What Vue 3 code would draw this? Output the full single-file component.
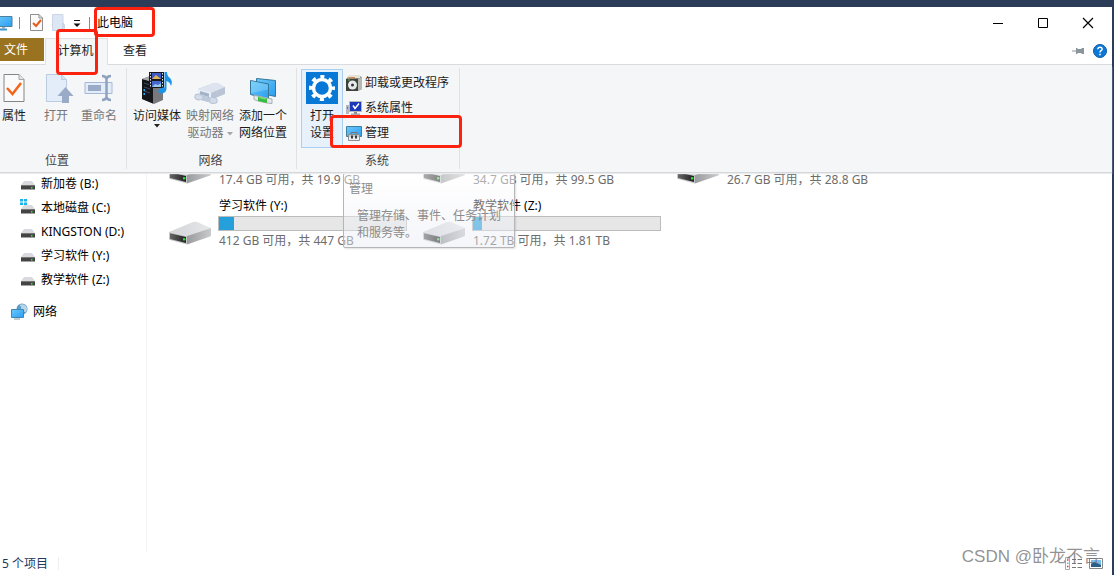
<script setup>
const places = [
  { name: '新加卷 (B:)' },
  { name: '本地磁盘 (C:)', system: true },
  { name: 'KINGSTON (D:)' },
  { name: '学习软件 (Y:)' },
  { name: '教学软件 (Z:)' },
]
const drives = [
  { detail: '17.4 GB 可用，共 19.9 GB' },
  { detail: '34.7 GB 可用，共 99.5 GB' },
  { detail: '26.7 GB 可用，共 28.8 GB' },
  { name: '学习软件 (Y:)', used: 8, detail: '412 GB 可用，共 447 GB' },
  { name: '教学软件 (Z:)', used: 5, detail: '1.72 TB 可用，共 1.81 TB' },
]
</script>

<template>
  <div class="desktop">
    <svg class="defs" width="0" height="0" aria-hidden="true">
      <defs>
        <linearGradient id="screen" x1="0" y1="0" x2="1" y2="1">
          <stop offset="0" stop-color="#6cc9fb" /><stop offset="1" stop-color="#2a9df0" />
        </linearGradient>
        <linearGradient id="driveTop" x1="0" y1="0" x2="1" y2="0">
          <stop offset="0" stop-color="#d2d4d8" /><stop offset="1" stop-color="#e6e7e9" />
        </linearGradient>
        <linearGradient id="driveSide" x1="0" y1="0" x2="1" y2="0">
          <stop offset="0" stop-color="#9a9b9e" /><stop offset="1" stop-color="#c9cacc" />
        </linearGradient>
        <linearGradient id="driveFront" x1="0" y1="0" x2="1" y2="0">
          <stop offset="0" stop-color="#666" /><stop offset="1" stop-color="#1f1f1f" />
        </linearGradient>
        <symbol id="drive" viewBox="0 0 44 24">
          <path d="M1 11 25 1q2-.6 4 0l14 6L19 15Z" fill="url(#driveTop)" />
          <path d="M19 15 43 7v7q0 1-1 1.500L19 23.500Z" fill="url(#driveSide)" />
          <path d="M1 11 19 15v8.500L2 19q-1-.4-1-1.500Z" fill="#c4c6c8" />
          <path d="M2 12.200 18 16v6L2 18Z" fill="url(#driveFront)" />
          <path d="M15 17.200h2.500v2.200H15Z" fill="#36e23c" />
        </symbol>
        <symbol id="smalldrive" viewBox="0 0 16 10">
          <path d="M3 0h8l3 4H0Z" fill="#d8dadd" />
          <path d="M0 4h14v4.500H0Z" fill="#444" />
          <path d="M0 4h14v1H0Z" fill="#777" />
          <path d="M10 6h1.500v1.500H10Z" fill="#3fe04a" />
        </symbol>
      </defs>
    </svg>

    <main class="window">
      <header class="titlebar">
        <svg class="pc" width="13" height="16" viewBox="0 0 13 16">
          <path d="M-3 1.500h15v10H-3Z" fill="url(#screen)" stroke="#4d7f9f" />
          <path d="M-1 14.500h8" stroke="#3c97cf" stroke-width="2" />
          <path d="M2 12h3v2H2Z" fill="#9db0bc" />
        </svg>
        <span class="bar-sep"></span>
        <button class="quick check" aria-label="属性">
          <svg width="13" height="17" viewBox="0 0 13 17">
            <path d="M.5.500h8.500l3.500 3.500v12.500H.5Z" fill="#fafafa" stroke="#8f8f8f" />
            <path d="M9 .5V4h3.500" fill="none" stroke="#8f8f8f" />
            <path d="m3 9 3 3 5-6" fill="none" stroke="#e85a1c" stroke-width="2" />
          </svg>
        </button>
        <button class="quick folder" aria-label="新建文件夹">
          <svg width="13" height="17" viewBox="0 0 13 17">
            <path d="M.5.500h10.500v9l1.500 1v6H.5Z" fill="#dce6f4" stroke="#ccd7e6" />
            <path d="M11 9v5l-2 2" fill="none" stroke="#b9c7dc" />
          </svg>
        </button>
        <button class="quick caret" aria-label="自定义快速访问工具栏">
          <svg width="8" height="8" viewBox="0 0 8 8"><path d="M1 .5h6" stroke="#111" /><path d="M.5 3.500h7L4 7Z" fill="#111" /></svg>
        </button>
        <span class="bar-sep"></span>
        <h1>此电脑</h1>
        <div class="controls">
          <button aria-label="最小化"><svg width="12" height="12"><path d="M1 6.500h10" stroke="#000" /></svg></button>
          <button aria-label="最大化"><svg width="12" height="12"><path d="M1.500 1.500h9v9h-9Z" fill="none" stroke="#000" /></svg></button>
          <button aria-label="关闭"><svg width="12" height="12"><path d="m1 1 10 10M11 1 1 11" stroke="#000" stroke-width="1.200" /></svg></button>
        </div>
      </header>

      <nav class="tabs">
        <button class="file">文件</button>
        <button class="tab active">计算机</button>
        <button class="tab">查看</button>
        <div class="tab-tools">
          <button aria-label="固定功能区">
            <svg width="12" height="8" viewBox="0 0 12 8"><path d="M0 4h4" stroke="#8b959c" /><path d="M4 1h1.500v1h4V1H12v6H9.500V6h-4v1H4Z" fill="#8b959c" /></svg>
          </button>
          <button aria-label="帮助">
            <svg width="14" height="14" viewBox="0 0 14 14">
              <circle cx="7" cy="7" r="6.500" fill="#0a78d6" stroke="#0a5ca8" />
              <path d="M4.800 5.200q.2-2 2.200-2t2.200 1.800q0 1-1.200 1.700-1 .6-1 1.700" fill="none" stroke="#fff" stroke-width="1.500" />
              <path d="M6.200 9.800h1.600v1.500H6.200Z" fill="#fff" />
            </svg>
          </button>
        </div>
      </nav>

      <section class="ribbon">
        <div class="group location">
          <div class="commands">
            <button class="big props">
              <svg width="22" height="32" viewBox="0 0 22 32">
                <path d="M1 2.500h15l5 5v22H1Z" fill="#fafafa" stroke="#858585" />
                <path d="M16 2.500v5h5" fill="#e6e6e6" stroke="#a5a5a5" />
                <path d="m4 16 5.500 6L18 11" fill="none" stroke="#f2661b" stroke-width="2.500" />
              </svg>
              <span>属性</span>
            </button>
            <button class="big open" disabled>
              <svg width="28" height="32" viewBox="0 0 28 32">
                <path d="M.5 2.500h15l5 5v22H.5Z" fill="#e3edf9" stroke="#bdcbe0" />
                <path d="M15.500 2.500v5h5" fill="#d2dff0" stroke="#bdcbe0" />
                <path d="m19.500 15 8 9H23v7h-7v-7h-4.500Z" fill="#9aabc8" />
              </svg>
              <span>打开</span>
            </button>
            <button class="big rename" disabled>
              <svg width="30" height="32" viewBox="0 0 30 32">
                <path d="M1 10.500h27v11H1Z" fill="#e3edf9" stroke="#a7b8d2" />
                <path d="M4 13h13v6H4Z" fill="#9aabc8" />
                <path d="M18 4q4 0 4.500 3Q23 4 27 4M22.500 6v20M18 28q4 0 4.500-3Q23 28 27 28" fill="none" stroke="#8fa2c0" stroke-width="2.500" />
              </svg>
              <span>重命名</span>
            </button>
          </div>
          <h2>位置</h2>
        </div>

        <div class="group network">
          <div class="commands">
            <button class="big wide">
              <svg width="32" height="32" viewBox="0 0 32 32">
                <path d="m1 7 11-4 10 4v21l-9 4L1 27Z" fill="#77797c" />
                <path d="m1 7 11 3v21.500L1 27Z" fill="#141619" /><path d="m1 7 10-4 10 4-9 3Z" fill="#a5a7aa" />
                <path d="m3 11 6 2m-6 2 6 2m-6 2 6 2" stroke="#3d4a5a" /><path d="M2.500 17h1.500v2H2.500ZM2.500 21h1.500v2H2.500Z" fill="#25a9ff" />
                <path d="M8 0h15v16H8Z" fill="#18191b" />
                <path d="M11 1h9v6h-9Z" fill="#3f59c6" /><path d="m11 7 4-4 5 4Z" fill="#dfb652" />
                <path d="M11 9h9v6h-9Z" fill="#4567cf" /><path d="m11 15 3-3 3 1 3-2v4Z" fill="#9bc7e8" />
                <path d="M9.500 1v15M21.500 1v15" stroke="#e5e5e5" stroke-dasharray="1.500 1.500" />
                <path d="M23.500 0H26q0 4 3 6 3 3 1 8-1-4-4.500-5v8q-.5 4-5 4.500-4 0-3-3.500 2-3 6-2.500Z" fill="#1e93e8" />
              </svg>
              <span>访问媒体</span>
              <svg class="drop" width="6" height="4" viewBox="0 0 6 4"><path d="M0 0h6L3 3.500Z" fill="#222" /></svg>
            </button>
            <button class="big wide" disabled>
              <svg width="34" height="32" viewBox="0 0 34 32">
                <path d="m5 17 16-6 11 4v7l-12 5-15-3Z" fill="#b9c4d6" />
                <path d="m5 17 16-6q2-.5 4 0l7 4-14 6Z" fill="#dde4ef" />
                <path d="m5 17 13 3.500V27L5 23.500Z" fill="#eaf0f7" />
                <path d="m7 19 9 2.500v3.500l-9-2.500Z" fill="#a5b2c9" />
                <path d="m2.500 22.500 4-.5 3 2 8 2 2-1 4 1.500q1.500 2 0 4.500l-5 .5-3-2-8-2-2 .5-3-1q-1.500-2 0-4.500Z" fill="#d3dce9" stroke="#b3bfd2" />
                <path d="m9 24.500 8.500 2v3.500L9 28Z" fill="#bdc9da" />
              </svg>
              <span>映射网络<br />驱动器 <svg class="inline-drop" width="6" height="4" viewBox="0 0 6 4"><path d="M0 0h6L3 3.500Z" fill="#a6a6a6" /></svg></span>
            </button>
            <button class="big wide">
              <svg width="28" height="32" viewBox="0 0 28 32">
                <path d="m7.500 6.500 19 2v16l-19-4Z" fill="url(#screen)" stroke="#347799" />
                <path d="m1.500 8.500 18 3.500v15L1.500 22.500Z" fill="url(#screen)" stroke="#347799" />
                <path d="m2 9 17 3.500v5L2 21Z" fill="#9addfb" opacity=".4" />
                <path d="m5 23.500 4 .5 9 2 5 1v4.500l-5-.5-9-2-4-1.500Z" fill="#e4e8eb" stroke="#a8afb4" />
                <path d="m9 24.500 9 2v4.500l-9-2Z" fill="#38bd43" />
                <path d="m10 25.500 7 1.500" stroke="#8de28c" />
              </svg>
              <span>添加一个<br />网络位置</span>
            </button>
          </div>
          <h2>网络</h2>
        </div>

        <div class="group system">
          <div class="commands">
            <button class="big settings">
              <svg width="32" height="32" viewBox="0 0 32 32">
                <path d="M0 0h32v32H0Z" fill="#0878d7" />
                <circle cx="16" cy="16" r="8.500" fill="none" stroke="#fff" stroke-width="3.500" />
                <circle cx="16" cy="16" r="11" fill="none" stroke="#fff" stroke-width="4" stroke-dasharray="4 4.640" stroke-dashoffset="2" />
              </svg>
              <span>打开<br />设置</span>
            </button>
            <div class="stack">
              <button class="small">
                <svg width="16" height="16" viewBox="0 0 16 16">
                  <path d="m0 4 3-3h10l3 1v12l-4 2H0Z" fill="#85867c" /><path d="M0 4h12v12H0Z" fill="#3e413f" />
                  <path d="M3 0h11v3H2Z" fill="#e6e2d8" /><path d="M3 2h6v1.500H2Z" fill="#c88d55" />
                  <circle cx="6.500" cy="10" r="4.500" fill="#e7ebec" /><circle cx="6.500" cy="10" r="1.500" fill="#333" />
                  <path d="m12 4 4-2v12l-4 2Z" fill="#b6b9b1" /><path d="M2 4.500h2v1H2Z" fill="#4fc54f" />
                </svg>卸载或更改程序
              </button>
              <button class="small">
                <svg width="16" height="16" viewBox="0 0 16 16">
                  <path d="M0 5h3v9H0Z" fill="#b5b9bd" /><path d="M3.500 1.500h12v10h-12Z" fill="#1b37ba" stroke="#b5b8c0" />
                  <path d="m7 5.500 2 3L13 3.500" fill="none" stroke="#fff" stroke-width="1.500" />
                  <path d="M8 12h3v2H8Z" fill="#888" /><path d="M5 14.500h9" stroke="#a8abb0" stroke-width="2" /><path d="M1 7h1v2H1Z" fill="#25a83b" />
                </svg>系统属性
              </button>
              <button class="small">
                <svg width="16" height="16" viewBox="0 0 16 16">
                  <path d="M.5 1.500h15v10H.5Z" fill="url(#screen)" stroke="#3f7fa0" />
                  <path d="M5 9V7.500h6V9" fill="none" stroke="#777" /><path d="M2.500 9.500h11v6h-11Z" fill="#edeeef" stroke="#8b9094" />
                  <path d="M3 11h10" stroke="#a5a8aa" /><path d="M5 10.500h2v3H5ZM9 10.500h2v3H9Z" fill="#3a3a3a" />
                </svg>管理
              </button>
            </div>
          </div>
          <h2>系统</h2>
        </div>
      </section>

      <div class="body">
        <aside>
          <a v-for="p in places" :key="p.name" href="#" class="place">
            <svg width="16" height="16" viewBox="0 0 16 16">
              <use href="#smalldrive" x="1" y="6" width="16" height="10" />
              <path v-if="p.system" d="M0 0h3v2.500H0ZM4 0h3v2.500H4ZM0 3.500h3V6H0ZM4 3.500h3V6H4Z" fill="#19b4ec" />
            </svg>{{ p.name }}
          </a>
          <a href="#" class="place net">
            <svg width="17" height="17" viewBox="0 0 17 17">
              <circle cx="11" cy="6" r="5.500" fill="#5d9cc5" /><path d="M8 2q3 1 2 4t5 3q2-3 0-6-3-3-7-1Z" fill="#b7d5e6" />
              <path d="M.5 6.500h12v8H.5Z" fill="url(#screen)" stroke="#3a87b8" /><path d="M3 16h6" stroke="#8b9aa4" />
            </svg>网络
          </a>
        </aside>
        <section class="drives">
          <article v-for="d in drives" :key="d.detail" class="drive">
            <svg class="drive-icon" width="44" height="24"><use href="#drive" width="44" height="24" /></svg>
            <h3>{{ d.name }}</h3>
            <div class="meter"><div v-if="d.used" class="track"><div class="fill" :style="{ width: d.used + '%' }"></div></div></div>
            <p>{{ d.detail }}</p>
          </article>
        </section>
        <div class="tooltip" role="tooltip">
          <strong>管理</strong>
          <p>管理存储、事件、任务计划和服务等。</p>
        </div>
      </div>

      <footer>
        <span class="count">5 个项目</span>
        <div class="views">
          <button aria-label="详细信息"><svg width="17" height="13" viewBox="0 0 17 13"><path d="M.5.500h4v12h-4Z" fill="#fff" stroke="#aaa" /><path d="M2 3h1.500M2 9.500h1.500" stroke="#d33" stroke-width="1.500" /><path d="M2 6.200h1.500" stroke="#38c" /><path d="M7 2.500h4M12.500 2.500H17M7 6.500h4M12.500 6.500H17M7 10.500h4M12.500 10.500H17" stroke="#777" /></svg></button>
          <button aria-label="大图标"><svg width="14" height="11" viewBox="0 0 14 11"><path d="M.5.500h13v10H.5Z" fill="#fff" stroke="#888" /><path d="M2 2h10v7H2Z" fill="#78bceb" /><path d="m2 6 4-2 6 3v2H2Z" fill="#285e87" /></svg></button>
        </div>
      </footer>
    </main>

    <div class="mark mark-title"></div>
    <div class="mark mark-tab"></div>
    <div class="mark mark-manage"></div>
    <div class="watermark">CSDN @卧龙不言</div>
  </div>
</template>

<style>
body { margin: 0; }
</style>

<style scoped>
* { box-sizing: border-box; }
.desktop {
  position: relative;
  display: flex;
  min-height: 100vh;
  padding: 7px 2px 0 0;
  background: #2b3c59;
  overflow: hidden;
  font: 12px/17px "Noto Sans", "Noto Sans CJK SC", sans-serif;
  color: #1c1c1c;
}
.defs { position: absolute; }
.window { flex: 1; display: flex; flex-direction: column; background: #fff; min-width: 0; }
button { padding: 0; border: 0; background: none; font: inherit; color: inherit; }
svg { flex: none; }
h1, h2, h3, p { margin: 0; font-size: 12px; font-weight: 400; }

.titlebar { display: flex; align-items: center; height: 31px; }
.bar-sep { width: 1px; height: 12px; margin: 0 6px; background: #8a8a8a; }
.quick { display: flex; }
.check { margin-left: 4px; }
.folder { margin-left: 9px; }
.caret { margin: 2px 2px 0 8px; }
h1 { margin-left: 1px; color: #000; }
.controls { display: flex; margin-left: auto; padding-right: 2px; }
.controls button { width: 45px; height: 31px; display: flex; align-items: center; justify-content: center; }

.tabs { display: flex; height: 27px; border-bottom: 1px solid #d9dbde; }
.file { width: 44px; height: 23px; padding-right: 12px; background: #99731f; color: #fff; }
.tab { width: 54px; height: 24px; }
.active { width: 63px; height: 27px; margin-left: 1px; padding: 0 2px 3px 0; background: #f5f6f7; border: 1px solid #dfe2e5; border-bottom: 0; }
.tab-tools { display: flex; align-items: center; gap: 9px; margin-left: auto; padding-right: 5px; }
.tab-tools button { display: flex; }

.ribbon { display: flex; height: 107px; background: #f4f6f8; position: relative; z-index: 1; box-shadow: 0 1px 0 #d5d8db, 0 2px 1px #ececee; }
.group { display: flex; flex-direction: column; justify-content: space-between; padding: 7px 0 3px; position: relative; }
.group::after { content: ""; position: absolute; right: 0; top: 3px; bottom: 3px; width: 1px; background: #e0e3e6; }
.commands { display: flex; }
h2 { text-align: center; color: #444; line-height: 17px; }
.big { display: flex; flex-direction: column; align-items: center; white-space: nowrap; }
.big span { margin-top: 3px; }
.big:disabled { color: #777; }
.location { width: 127px; }
.location h2 { padding-right: 13px; }
.props { width: 28px; }
.open { width: 28px; margin-left: 18px; }
.open span { margin-right: 8px; }
.rename { margin-left: 6px; padding-left: 1px; }
.network { width: 170px; }
.network .commands { gap: 5px; padding-left: 6px; }
.network h2 { padding-right: 3px; }
.wide { width: 48px; }
.inline-drop { vertical-align: middle; }
.system { width: 163px; padding-top: 4px; }
.system h2 { padding-right: 3px; }
.settings { width: 42px; height: 79px; margin-left: 4px; padding-top: 2px; border: 1px solid #a9cff2; background: #e6f1fb; }
.stack { display: flex; flex-direction: column; margin-left: 3px; padding-top: 1px; }
.small { display: flex; align-items: center; gap: 3px; height: 25px; white-space: nowrap; }

.body { flex: 1; display: flex; position: relative; overflow: hidden; }
aside { width: 147px; margin-top: -1px; border-right: 1px solid #f4f4f4; }
.place { display: flex; align-items: center; gap: 5px; height: 24px; padding-left: 20px; color: #000; text-decoration: none; white-space: nowrap; }
.net { margin-top: 8px; padding-left: 11px; }
.drives { flex: 1; display: grid; grid-template-columns: repeat(auto-fill, 254px); grid-auto-rows: 53px; row-gap: 8px; align-content: start; margin-top: -36px; padding-left: 21px; }
.drive { display: grid; grid-template: 18px 17px 18px / 44px 189px; column-gap: 6px; white-space: nowrap; }
.drive-icon { grid-row: 1 / 4; align-self: end; margin-bottom: 5px; }
.drive h3 { padding-left: 1px; color: #000; grid-column: 2; line-height: 18px; }
.meter { grid-column: 2; padding-top: 1px; }
.track { height: 15px; border: 1px solid #bcbcbc; background: #e6e6e6; }
.fill { height: 100%; background: #26a0da; }
.drive p { grid-column: 2; padding-left: 1px; color: #6d6d6d; line-height: 18px; }
.tooltip { position: absolute; left: 343px; top: 1px; width: 172px; height: 75px; padding: 6px 5px; border: 1px solid #b5b5b8; border-radius: 2px; background: linear-gradient(rgba(255, 255, 255, .45), rgba(232, 234, 243, .45)); box-shadow: 1px 1px 2px rgba(0, 0, 0, .12); color: #8c8c8c; }
.tooltip strong { display: block; font-weight: 400; }
.tooltip p { margin: 10px 0 0 8px; }

footer { display: flex; align-items: center; justify-content: space-between; height: 23px; color: #1e395b; }
.count { padding: 0 10px 0 2px; border-right: 1px solid #eee; line-height: 13px; }
.views { display: flex; align-items: center; gap: 7px; padding-right: 9px; }
.views button { display: flex; }

.mark { position: absolute; z-index: 3; border: 3px solid #fc2210; border-radius: 4px; pointer-events: none; }
.mark-title { left: 94px; top: 7px; width: 61px; height: 30px; }
.mark-tab { left: 56px; top: 29px; width: 42px; height: 46px; }
.mark-manage { left: 330px; top: 115px; width: 132px; height: 33px; }
.watermark { position: absolute; right: 14px; bottom: 6px; z-index: 2; font-family: "Liberation Sans", "Noto Sans CJK SC", sans-serif; font-size: 17px; line-height: 24px; color: rgba(110, 110, 110, .75); }
</style>
